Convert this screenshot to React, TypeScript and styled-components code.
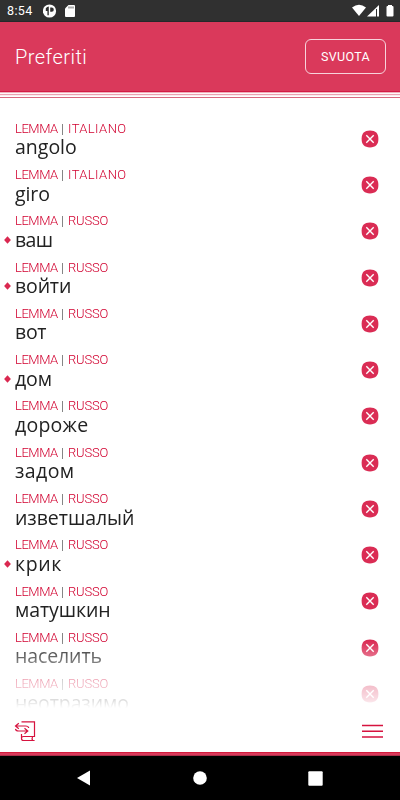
import React from "react";
import styled, { createGlobalStyle } from "styled-components";

const Global = createGlobalStyle`
  * { box-sizing: border-box; }
  body { margin: 0; background: #fff; }
`;

const Screen = styled.div`
  width: 400px;
  height: 800px;
  display: flex;
  flex-direction: column;
  overflow: hidden;
  background: #fff;
  font-family: "Open Sans", "Noto Sans", sans-serif;
`;

const StatusBar = styled.div`
  height: 22px;
  flex: none;
  display: flex;
  align-items: center;
  padding: 0 6px 0 7px;
  background: #303030;
  border-bottom: 1px solid #26282a;
  color: #fff;
`;

const Clock = styled.span`
  width: 36px;
  font: 400 12.5px/22px Roboto, sans-serif;
  letter-spacing: 0.4px;
`;

const StatusIcons = styled.svg<{ $end?: boolean }>`
  display: block;
  flex: none;
  margin-left: ${(p) => (p.$end ? "auto" : "0")};
`;

const Header = styled.header`
  height: 70px;
  flex: none;
  display: flex;
  align-items: center;
  justify-content: space-between;
  padding: 0 14px 0 15px;
  background: #da395b;
  border-bottom: 1px solid #d31b45;
`;

const Title = styled.h1`
  margin: 0;
  font: 300 20px/26px Roboto, sans-serif;
  letter-spacing: 0.47px;
  color: #fff;
`;

const ClearButton = styled.button`
  width: 81px;
  height: 35px;
  padding: 1px 0 0;
  border: 1px solid #f7d3db;
  border-radius: 6px;
  background: transparent;
  color: #fff;
  font: 400 12.5px/32px Roboto, sans-serif;
  letter-spacing: 0.3px;
`;

const Stripes = styled.div`
  height: 6px;
  flex: none;
  background: linear-gradient(
    #f0aebb 0 1px, #fff8f8 1px 2px, #eaa2b1 2px 3px,
    #fcecef 3px 4px, #fff 4px 5px, #d9687f 5px 6px
  );
`;

const List = styled.ul`
  flex: 1;
  min-height: 0;
  margin: 0;
  padding: 22.4px 0 0;
  overflow: hidden;
  list-style: none;
  mask-image: linear-gradient(#000 0 543px, rgba(0, 0, 0, 0.6) 563px, rgba(0, 0, 0, 0.3) 588px, rgba(0, 0, 0, 0.14) 603px, transparent 610px);
`;

const Row = styled.li`
  height: 46.27px;
  display: flex;
  align-items: flex-start;
  justify-content: space-between;
  padding: 0 21px 0 4px;
`;

const Entry = styled.div`
  display: grid;
  grid-template-columns: 11px auto;
  grid-template-rows: 17px 20px;
  align-items: center;
`;

const Label = styled.div`
  grid-column: 2;
  display: flex;
  font: 300 13px/18px Roboto, sans-serif;
  color: #d1002f;
`;

const Kind = styled.span`
  width: 46px;
  letter-spacing: -0.45px;
`;

const Divider = styled.span`
  width: 7px;
  color: #444;
`;

const Language = styled.span<{ $gap: number }>`
  letter-spacing: ${(p) => p.$gap}px;
`;

const Word = styled.div<{ $gap: number }>`
  grid-column: 2;
  font-size: 19.5px;
  line-height: 20px;
  font-weight: 400;
  color: #222;
  letter-spacing: ${(p) => p.$gap}px;
`;

const Mark = styled.svg`
  display: block;
  grid-row: 2;
`;

const RemoveButton = styled.button`
  width: 18px;
  height: 18px;
  margin-top: 9.4px;
  padding: 0;
  border: 0;
  background: none;
  svg { display: block; }
`;

const Toolbar = styled.footer`
  height: 44px;
  flex: none;
  display: flex;
  align-items: flex-start;
  justify-content: space-between;
  padding: 12px 17px 0 14px;
`;

const Accent = styled.div`
  height: 4px;
  flex: none;
  background: linear-gradient(#d31b3c 0 1px, #da395b 1px 3px, #aa2f49 3px 4px);
`;

const NavBar = styled.nav`
  height: 44px;
  flex: none;
  display: flex;
  justify-content: space-between;
  align-items: center;
  padding: 0 77px 0 76px;
  background: #000;
`;

type Item = { word: string; lang: "ITALIANO" | "RUSSO"; marked?: boolean; gap: number };

const items: Item[] = [
  { word: "angolo", lang: "ITALIANO", gap: 0 },
  { word: "giro", lang: "ITALIANO", gap: -0.1 },
  { word: "ваш", lang: "RUSSO", marked: true, gap: -0.6 },
  { word: "войти", lang: "RUSSO", marked: true, gap: -0.15 },
  { word: "вот", lang: "RUSSO", gap: -0.3 },
  { word: "дом", lang: "RUSSO", marked: true, gap: -0.1 },
  { word: "дороже", lang: "RUSSO", gap: 0.25 },
  { word: "задом", lang: "RUSSO", gap: 0.4 },
  { word: "изветшалый", lang: "RUSSO", gap: -0.05 },
  { word: "крик", lang: "RUSSO", marked: true, gap: 0.6 },
  { word: "матушкин", lang: "RUSSO", gap: -0.1 },
  { word: "населить", lang: "RUSSO", gap: -0.1 },
  { word: "неотразимо", lang: "RUSSO", gap: -0.1 },
];

const FavoriteRow = ({ word, lang, marked, gap }: Item) => (
  <Row>
    <Entry>
      <Label>
        <Kind>LEMMA</Kind>
        <Divider>|</Divider>
        <Language $gap={lang === "ITALIANO" ? 0.4 : -0.2}>{lang}</Language>
      </Label>
      {marked && (
        <Mark width="7" height="8" viewBox="0 0 7 8"><path d="M3.5.3 6.9 4 3.5 7.7.1 4Z" fill="#da2850" /></Mark>
      )}
      <Word $gap={gap}>{word}</Word>
    </Entry>
    <RemoveButton aria-label="Rimuovi">
      <svg width="18" height="18" viewBox="0 0 18 18">
        <path d="M9 .6C14.6.6 17.4 3.4 17.4 9S14.6 17.4 9 17.4.6 14.6.6 9 3.4.6 9 .6Z" fill="#da2c54" />
        <path d="m5.3 5.3 7.4 7.4m0-7.4-7.4 7.4" stroke="#fff" strokeWidth="1.4" />
      </svg>
    </RemoveButton>
  </Row>
);

export default function App() {
  return (
    <Screen>
      <Global />
      <StatusBar>
        <Clock>8:54</Clock>
        <StatusIcons width="34" height="16" viewBox="0 0 34 16">
          <circle cx="6.5" cy="8" r="6.6" fill="#fff" />
          <path d="M2.8 5.2q1.2-1.6 3-1.6v8.6H4.4V8H2.8ZM7.2 4.6h1.5a2.1 2.1 0 0 1 0 4.2H7.2Z" fill="#303030" />
          <path d="M25.5 2H31a1 1 0 0 1 1 1v10a1 1 0 0 1-1 1h-8a1 1 0 0 1-1-1V5.5Z" fill="#fff" />
          <path d="M26 3.5v2m2-2v2m2-2v2" stroke="#303030" strokeWidth=".8" />
        </StatusIcons>
        <StatusIcons $end width="42" height="16" viewBox="0 0 42 16">
          <path d="M0 4.5Q7-.8 14 4.5L7 13Z" fill="#fff" />
          <path d="M15 13.5 27 2v11.5Z" fill="#fff" />
          <path d="M24.5 6v8" stroke="#303030" />
          <path d="M34.5 4q0-1 1-1H36V2h4v1h.5q1 0 1 1v8.5q0 1-1 1h-5q-1 0-1-1Z" fill="#fff" />
        </StatusIcons>
      </StatusBar>
      <Header>
        <Title>Preferiti</Title>
        <ClearButton>SVUOTA</ClearButton>
      </Header>
      <Stripes />
      <List>{items.map((item) => <FavoriteRow key={item.word} {...item} />)}</List>
      <Toolbar>
        <svg width="22" height="22" viewBox="0 0 22 22" fill="none" stroke="#d6133f" strokeWidth="1.2">
          <path d="M7.5 1.8h13v14.7h-11q-2 0-2 2t2 2h11M7.5 14v4.5M18.6 16.5q-1 2 0 4h2" />
          <path d="M4.8 3.2 1.5 6l3.3 2.8M1.8 6h9.7q3 0 3.2 2M10.5 8.2l3.3 2.8-3.3 2.8M13.5 11H4.5q-2.7 0-3-2.2" />
        </svg>
        <svg width="21" height="22" viewBox="0 0 21 22" stroke="#d6133f" strokeWidth="1.5">
          <path d="M0 5.4h21M0 11.2h21M0 17h21" />
        </svg>
      </Toolbar>
      <Accent />
      <NavBar>
        <svg width="15" height="16" viewBox="0 0 15 16"><path d="M14 .5v15L1 8Z" fill="#fff" /></svg>
        <svg width="14" height="14" viewBox="0 0 14 14"><circle cx="7" cy="7" r="6.8" fill="#fff" /></svg>
        <svg width="15" height="15" viewBox="0 0 15 15"><rect x=".3" y=".3" width="14.4" height="14.4" rx="1" fill="#fff" /></svg>
      </NavBar>
    </Screen>
  );
}
